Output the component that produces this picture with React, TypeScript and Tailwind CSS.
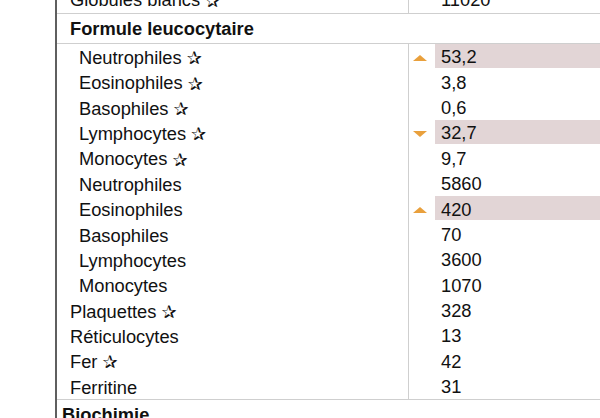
import React from "react";

type Row = { label: string; star?: boolean; level: 1 | 2; value: string; flag?: "up" | "down" };

const rows: Row[] = [
  { label: "Neutrophiles", star: true, level: 2, value: "53,2", flag: "up" },
  { label: "Eosinophiles", star: true, level: 2, value: "3,8" },
  { label: "Basophiles", star: true, level: 2, value: "0,6" },
  { label: "Lymphocytes", star: true, level: 2, value: "32,7", flag: "down" },
  { label: "Monocytes", star: true, level: 2, value: "9,7" },
  { label: "Neutrophiles", level: 2, value: "5860" },
  { label: "Eosinophiles", level: 2, value: "420", flag: "up" },
  { label: "Basophiles", level: 2, value: "70" },
  { label: "Lymphocytes", level: 2, value: "3600" },
  { label: "Monocytes", level: 2, value: "1070" },
  { label: "Plaquettes", star: true, level: 1, value: "328" },
  { label: "Réticulocytes", level: 1, value: "13" },
  { label: "Fer", star: true, level: 1, value: "42" },
  { label: "Ferritine", level: 1, value: "31" },
];

function Star() {
  return <span className="ml-[5px] text-[18px] font-['DejaVu_Sans',sans-serif]">✰</span>;
}

function Up() {
  return (
    <svg width="14" height="6" viewBox="0 0 14 6" className="block">
      <polygon points="7,0 14,6 0,6" fill="#e9a03c" />
    </svg>
  );
}
function Down() {
  return (
    <svg width="14" height="6" viewBox="0 0 14 6" className="block">
      <polygon points="0,0 14,0 7,6" fill="#e9a03c" />
    </svg>
  );
}

function DataRow({ r }: { r: Row }) {
  return (
    <div className="flex h-[25.36px]">
      <div
        className={
          "w-[352px] shrink-0 border-r border-[#cfcfcf] flex items-center pt-[3px] " +
          (r.level === 2 ? "pl-[22px]" : "pl-[13px]")
        }
      >
        <span>{r.label}</span>
        {r.star && <Star />}
      </div>
      <div className="flex-1 flex">
        <div className="w-[26px] shrink-0 flex items-center justify-start pl-[4px] pt-[3px]">
          {r.flag === "up" && <Up />}
          {r.flag === "down" && <Down />}
        </div>
        <div className={"flex-1 h-[24px] flex items-center pl-[6px] pt-[3px] " + (r.flag ? "bg-[#e2d5d6]" : "")}>
          {r.value}
        </div>
      </div>
    </div>
  );
}

export default function App() {
  return (
    <div className="w-[600px] h-[418px] overflow-hidden bg-white text-[18.3px] text-[#111] font-['Liberation_Sans',Arial,sans-serif] leading-none">
      <div className="ml-[55px] border-l-2 border-[#5f5f5f] mt-[-12px]">
        <div className="flex h-[26px] border-b border-[#cfcfcf]">
          <div className="w-[352px] shrink-0 border-r border-[#cfcfcf] flex items-center pl-[13px]">
            <span>Globules blancs</span>
            <Star />
          </div>
          <div className="flex-1 flex items-center pl-[32px]">11020</div>
        </div>
        <div className="h-[30px] border-b border-[#cfcfcf] flex items-center pl-[13px] pt-[2px] font-bold">
          Formule leucocytaire
        </div>
        {rows.map((r, i) => (
          <DataRow key={i} r={r} />
        ))}
        <div className="h-[30px] border-t border-[#cfcfcf] flex items-center pl-[5px] font-bold pt-[2px]">
          Biochimie
        </div>
      </div>
    </div>
  );
}
